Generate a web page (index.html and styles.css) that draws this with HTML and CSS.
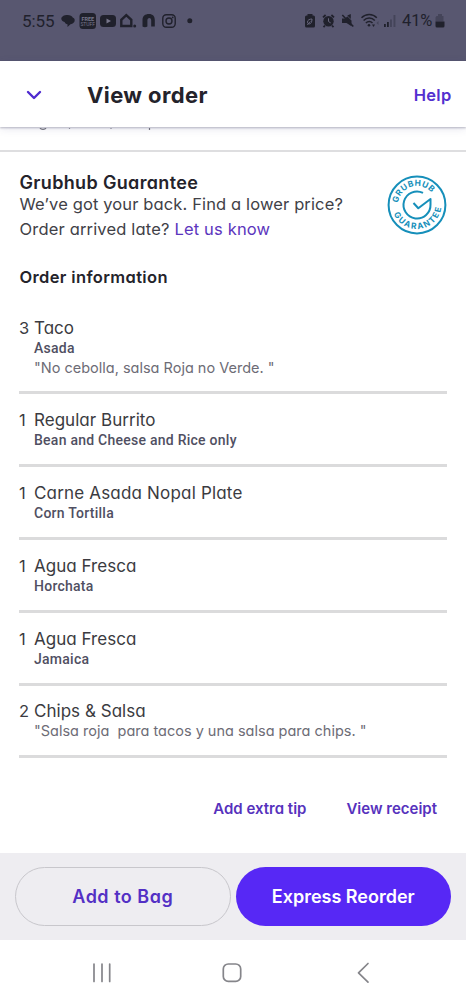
FILE: index.html
```html
<!DOCTYPE html>
<html lang="en">
<head>
<meta charset="utf-8">
<title>View order</title>
<link rel="stylesheet" href="styles.css">
</head>
<body>
<div class="screen">
  <div class="status">
    <span class="clock">5:55</span>
    <svg class="status-left" width="136" height="20" viewBox="60 11 136 20">
      <path d="M67.500 15c2.700 0 4.600 1 5.200 2.500 1.300.5 2 1.500 2 2.700 0 2-1.600 3.600-4.200 4l-3 2.800v-2.800c-1.500-.2-2.600-1-2.900-2.200-2-.5-3.300-1.600-3.300-3.200 0-2.200 2.700-3.800 6.200-3.800z"/>
      <rect x="79.500" y="13" width="16.500" height="16" rx="3.500"/>
      <text class="app-label" x="87.750" y="20.500" text-anchor="middle">FREE</text>
      <text class="app-label small" x="87.750" y="26" text-anchor="middle">STUFF</text>
      <rect x="100" y="15" width="16" height="12" rx="3.500"/>
      <path class="cut" d="M106.500 18.500l4.500 2.500-4.500 2.500z"/>
      <path class="line" d="M121.300 26v-6.200l5-4.600 5 4.600V26z" stroke-width="2.400"/>
      <circle cx="134.700" cy="25.900" r="1.500"/>
      <path d="M142.500 26.500V20c0-4 2.500-6 6.500-6 3.800 0 5.800 2.200 5.800 6v6.500h-3.600v-6c0-1.600-.6-2.500-1.800-2.500-1.300 0-2 .9-2 2.500v6c-1.500 1-3.500 1-4.900 0z"/>
      <rect class="line" x="162.800" y="14.800" width="12.400" height="12.400" rx="3.500" stroke-width="1.400"/>
      <circle class="line" cx="169" cy="21" r="3" stroke-width="1.400"/>
      <circle cx="172.700" cy="17.400" r=".9"/>
      <circle cx="189.800" cy="20.800" r="2.500"/>
    </svg>
    <svg class="status-right" width="94" height="20" viewBox="303 11 94 20">
      <path d="M307.500 14h5v1.500h1a1.500 1.500 0 0 1 1.500 1.500v9a1.500 1.500 0 0 1-1.500 1.500h-7A1.500 1.500 0 0 1 305 26v-9a1.500 1.500 0 0 1 1.500-1.500h1z"/>
      <path class="cutline" d="M307.500 22c0-2 2-3 4.500-3 0 3-1 5-3 5-.9 0-1.500-.8-1.500-2zM307.300 24.800l3-3.300"/>
      <circle cx="328.500" cy="21.300" r="5.200"/>
      <path class="line" d="M323 17.300l2.600-2.300M334 17.300l-2.600-2.300M325 25.500l-1.500 1.600M332 25.500l1.500 1.600" stroke-width="1.800"/>
      <path class="cutline" d="M328.500 18.300v3.200l2.200 1.400"/>
      <path d="M342 18.500h3l2.300-2 .2 0 4 4v5.800l-5-3.300H342zM347.300 15.500l3.500-1.500v5z"/>
      <path class="line" d="M342.300 15l11 11.500" stroke-width="1.600"/>
      <path class="line" d="M361.500 17.800c4.300-4.400 11.200-4.400 15.300 0M363.600 20.500c3.200-3.200 8.100-3.200 11.200 0M365.900 23c2-2 4.700-2 6.600 0" stroke-width="1.500"/>
      <circle cx="369" cy="25.300" r="1.300"/>
      <path d="M372 24.500h3l-1.500 2.500z"/>
      <path class="dim" d="M376.500 23l2-2v4z"/>
      <path d="M384 24h1.800v3H384zM387 22h1.800v5H387z"/>
      <path class="dim" d="M390 19.500h1.900V27H390zM393.500 15h1.900v12h-1.900z"/>
    </svg>
    <span class="percent">41%</span>
    <svg class="battery" width="10" height="14" viewBox="0 0 10 14">
      <path class="dim" d="M3 0h4v2h1.500v5.500h-8V3.500L1.500 2H3z"/>
      <path d="M.5 7.500h9V12a1.500 1.500 0 0 1-1.500 1.500H2A1.500 1.500 0 0 1 .5 12z"/>
    </svg>
  </div>

  <header class="header">
    <svg class="chevron" width="16" height="11" viewBox="0 0 16 11"><path d="M2 2l6 6 6-6"/></svg>
    <h1 class="title">View order</h1>
    <a class="help">Help</a>
  </header>

  <div class="clipped">
    <svg width="120" height="4" viewBox="0 0 120 4"><path d="M2 0c1 1.800 5 1.800 6 0M31.500 0v.8M73 0v.8M111.500 0v2"/></svg>
  </div>

  <main class="content">
    <section class="guarantee">
      <div>
        <h2 class="guarantee-title">Grubhub Guarantee</h2>
        <p class="body body-one">We’ve got your back. Find a lower price?</p>
        <p class="body body-two">Order arrived late? <a class="link">Let us know</a></p>
      </div>
      <svg class="seal" width="60" height="60" viewBox="-30 -30 60 60">
        <defs>
          <path id="arc-top" d="M-18.900-2A19 19 0 0 1 19 0"/>
          <path id="arc-bottom" d="M-23.200 8.900A24.800 24.800 0 0 0 22.500-10.500"/>
        </defs>
        <circle r="28.400"/>
        <path d="M6-12.100A13.500 13.500 0 1 0 13.500-.5V-6L1.300 3.200-3.500-2"/>
        <text class="seal-top"><textPath href="#arc-top">GRUBHUB</textPath></text>
        <text class="seal-bottom"><textPath href="#arc-bottom">GUARANTEE</textPath></text>
      </svg>
    </section>

    <h2 class="section-title">Order information</h2>
    <ul class="items">
      <li class="item"><span class="qty">3</span><div><p class="name">Taco</p><p class="option">Asada</p><p class="note">"No cebolla, salsa Roja no Verde. "</p></div></li>
      <li class="item"><span class="qty">1</span><div><p class="name">Regular Burrito</p><p class="option">Bean and Cheese and Rice only</p></div></li>
      <li class="item"><span class="qty">1</span><div><p class="name wide">Carne Asada Nopal Plate</p><p class="option">Corn Tortilla</p></div></li>
      <li class="item"><span class="qty">1</span><div><p class="name">Agua Fresca</p><p class="option">Horchata</p></div></li>
      <li class="item"><span class="qty">1</span><div><p class="name">Agua Fresca</p><p class="option">Jamaica</p></div></li>
      <li class="item"><span class="qty">2</span><div><p class="name">Chips &amp; Salsa</p><p class="note">"Salsa roja&nbsp; para tacos y una salsa para chips. "</p></div></li>
    </ul>
    <div class="links"><a>Add extra tip</a><a>View receipt</a></div>
  </main>

  <footer class="actions">
    <button class="button outline">Add to Bag</button>
    <button class="button filled">Express Reorder</button>
  </footer>
  <nav class="system-nav">
    <svg width="466" height="60" viewBox="0 940 466 60">
      <path d="M94 964v17.500M102 964v17.500M109.700 964v17.500"/>
      <rect x="223.300" y="964" width="17.400" height="17.400" rx="5"/>
      <path d="M368 963.500l-9.500 9.300 9.500 9.300"/>
    </svg>
  </nav>
</div>
</body>
</html>
```
FILE: styles.css
```css
* { box-sizing: border-box; margin: 0; padding: 0; }
body { background: #fff; color: #24232b; font-family: Inter, "Open Sans", sans-serif; font-feature-settings: "cv11"; }
svg { display: block; flex: none; }
.screen { width: 466px; height: 1000px; display: flex; flex-direction: column; overflow: hidden; }

.status { height: 61px; background: #585770; display: flex; align-items: flex-start; padding: 11px 0 0 21px; color: #20212c; fill: #20212c; font-family: Roboto, sans-serif; }
.clock { width: 39px; padding-left: 1px; font-size: 17px; line-height: 20px; letter-spacing: -.1px; }
.status-right { margin-left: 107px; }
.percent { width: 38px; padding-left: 5px; font-size: 16.500px; line-height: 20px; letter-spacing: -.1px; }
.battery { margin-top: 3px; }
.app-label { font: 700 5.500px Roboto, sans-serif; fill: #77768a; }
.small { font-size: 5px; font-weight: 400; }
.cut { fill: #77768a; }
.cutline { fill: none; stroke: #67667c; stroke-width: 1; }
.line { fill: none; stroke: #20212c; }
.dim { fill: #444459; }

.header { height: 66px; flex: none; display: flex; align-items: center; padding: 2px 14.500px 0 26px; background: #fff; box-shadow: 0 1px 2px rgba(70, 70, 100, .35), 0 2px 8px rgba(70, 70, 130, .13); z-index: 1; }
.chevron path { fill: none; stroke: #4f2bcf; stroke-width: 2.400; stroke-linecap: round; stroke-linejoin: round; }
.title { margin-left: 45px; font-size: 22px; line-height: 28px; font-weight: 700; letter-spacing: .38px; }
.help { margin-left: auto; font-size: 16.500px; font-weight: 600; letter-spacing: .3px; color: #5330d0; }
.clipped { height: 25px; flex: none; padding-left: 38px; border-bottom: 2px solid #dedee0; }
.clipped svg { margin-top: 1px; }
.clipped path { fill: none; stroke: #77777f; stroke-width: 1.200; }

.content { flex: none; height: 701px; padding: 20px 19px 0; }
.guarantee { height: 93px; padding-left: .5px; display: flex; justify-content: space-between; align-items: flex-start; }
.seal { margin-top: 3px; fill: none; stroke: #168fba; stroke-width: 2; stroke-linejoin: round; }
.seal text { font: 700 8.300px Inter, sans-serif; fill: #168fba; stroke: none; }
.seal-top { letter-spacing: .5px; }
.seal-bottom { letter-spacing: 1.500px; }
.guarantee-title { font-size: 18px; line-height: 22px; font-weight: 600; letter-spacing: .34px; }
.body { font-size: 16.500px; line-height: 24.500px; font-weight: 400; color: #414147; white-space: nowrap; }
.body-one { margin-top: -2px; letter-spacing: .13px; }
.body-two { letter-spacing: .17px; }
.link { color: #5c36bd; }
.section-title { padding-left: .5px; font-size: 16.500px; line-height: 24px; font-weight: 600; letter-spacing: .36px; }
.items { margin-top: 13px; list-style: none; }
.item { display: flex; padding: 15px 0 14px; border-bottom: 3px solid #dbdbdc; }
.item:last-child { padding: 14px 0; }
.qty { width: 15px; font-size: 16.500px; line-height: 22px; color: #3b3b41; }
.name { font-size: 17px; line-height: 22px; letter-spacing: .03px; color: #3b3b41; }
.wide { letter-spacing: .18px; }
.option { font: 500 14px/19px Roboto, sans-serif; letter-spacing: .25px; color: #504f62; }
.note { font-size: 14.500px; line-height: 19px; color: #6d6c76; white-space: nowrap; }
.item:last-child .note { margin-top: -1px; margin-bottom: 1px; }
.links { margin-top: 40px; display: flex; justify-content: flex-end; gap: 40px; padding-right: 10px; font-size: 15px; line-height: 22px; font-weight: 600; color: #5632bd; }

.actions { height: 87px; flex: none; display: flex; gap: 5px; align-items: center; padding: 0 15px; background: #eeedf1; }
.button { flex: none; width: 215.500px; height: 59px; border-radius: 30px; font: 600 18px Inter, sans-serif; font-feature-settings: "cv11"; }
.outline { border: 1.500px solid #c8c7cc; background: transparent; color: #5330c5; letter-spacing: .5px; }
.filled { border: 0; background: #5728f5; color: #fff; }
.system-nav path, .system-nav rect { fill: none; stroke: #85858a; stroke-width: 1.700; stroke-linecap: round; stroke-linejoin: round; }
```
